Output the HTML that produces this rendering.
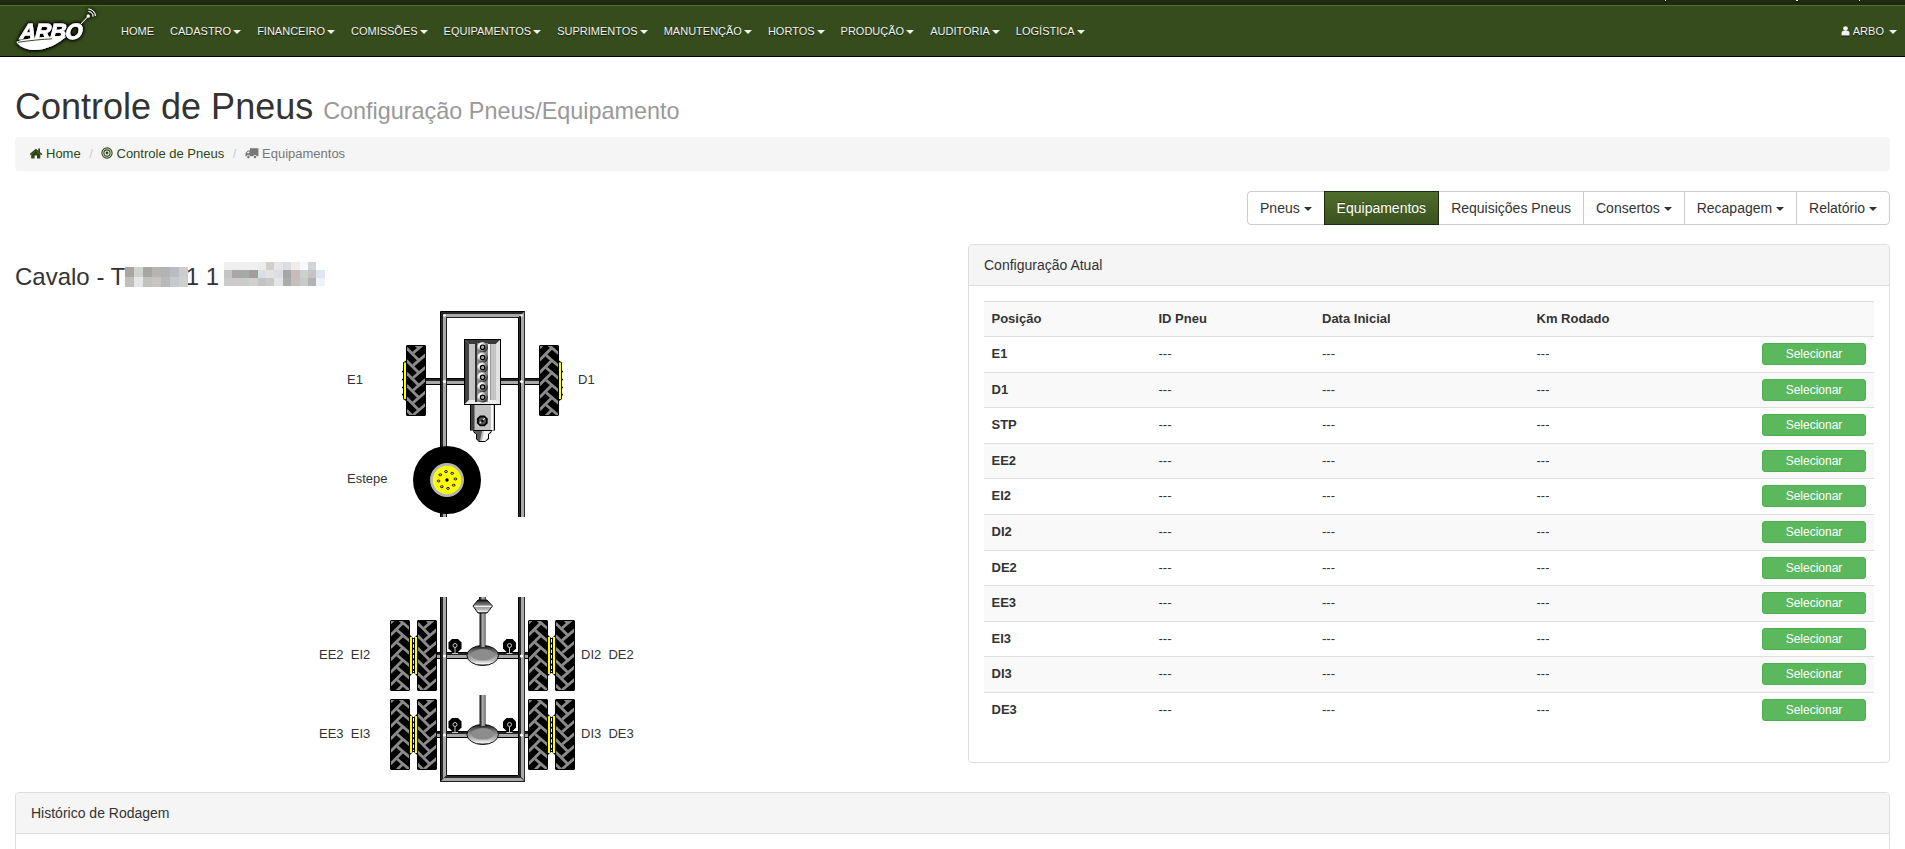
<!DOCTYPE html>
<html><head><meta charset="utf-8">
<style>
*{box-sizing:border-box}
html,body{margin:0;padding:0}
body{font-family:"Liberation Sans",sans-serif;font-size:13px;line-height:1.42857;color:#333;background:#fff;width:1905px;height:849px;overflow:hidden;position:relative}
.nav{position:absolute;left:0;top:0;width:1905px;height:57px;background:#364c1c;border-top:5px solid #1d2a0e;border-bottom:1px solid #000}
.nav:before{content:"";position:absolute;left:0;right:0;top:0;height:1px;background:#50702c}
.nav .items{position:absolute;left:113px;top:1px;height:51px;display:flex;align-items:center}
.nav .items a{color:#f2f2f2;font-size:11px;padding:0 8px;text-decoration:none;text-shadow:0 1px 1px rgba(0,0,0,.7);white-space:nowrap;line-height:51px}
.caret{display:inline-block;width:0;height:0;margin-left:2px;vertical-align:middle;border-top:4px solid;border-right:4px solid transparent;border-left:4px solid transparent}
.nav .user{position:absolute;right:8px;top:1px;line-height:51px;font-size:11px;color:#f2f2f2;text-shadow:0 1px 1px rgba(0,0,0,.7)}
.logo{position:absolute;left:0;top:-5px}
h1{position:absolute;left:15px;top:87px;margin:0;font-size:36px;font-weight:normal;line-height:40px;color:#333;white-space:nowrap}
h1 small{font-size:23.4px;color:#999;font-weight:normal}
.bc{position:absolute;left:15px;top:137px;width:1875px;height:34px;background:#f5f5f5;border-radius:4px;font-size:13px;line-height:34px;padding-left:15px;white-space:nowrap}
.bc a{color:#2f4716;text-decoration:none}
.bc .sep{color:#ccc;padding:0 8.6px 0 8.6px}
.bc .act{color:#777}
.bc svg{vertical-align:-1px;margin-right:3px}
.btng{position:absolute;right:15px;top:191px;height:34px;display:flex}
.btng .b .caret{margin-left:0}
.btng .b{height:34px;border:1px solid #ccc;margin-left:-1px;padding:0 12px;font-size:14px;line-height:32px;color:#333;background:#fff;white-space:nowrap}
.btng .b:first-child{border-radius:4px 0 0 4px;margin-left:0}
.btng .b:last-child{border-radius:0 4px 4px 0}
.btng .b.act{background:linear-gradient(#4f6d2c,#3a521f);border-color:#1e2b0f;color:#fff;text-shadow:0 -1px 0 rgba(0,0,0,.3);position:relative;z-index:2}
.h3{position:absolute;left:15px;top:264px;font-size:24px;line-height:26px;white-space:nowrap;color:#333}
.pix{position:absolute;display:grid}
.panel{position:absolute;border:1px solid #ddd;border-radius:4px;background:#fff}
.panel .ph{height:41px;background:#f5f5f5;border-bottom:1px solid #ddd;border-radius:3px 3px 0 0;padding:0 15px;font-size:14px;line-height:40px;color:#333}
.tr{position:absolute;left:984px;width:890px;border-top:1px solid #ddd;font-size:13px;line-height:18.57px}
.tr.st{background:#f9f9f9}
.tr span{position:absolute;top:8px}
.tr .b{font-weight:bold}
.tr .sel{position:absolute;right:8px;top:6px;width:104px;height:22px;background:#5cb85c;border:1px solid #4cae4c;border-radius:3px;color:#fff;font-size:12px;line-height:20px;text-align:center}
.lbl{position:absolute;font-size:13px;line-height:15px;color:#333;white-space:nowrap}
</style></head><body>
<div class="nav">
  <svg class="logo" width="110" height="56" viewBox="0 0 110 56"><defs><filter id="glow" x="-30%" y="-30%" width="160%" height="160%"><feGaussianBlur in="SourceAlpha" stdDeviation="2"/><feComponentTransfer><feFuncA type="linear" slope="2.2"/></feComponentTransfer><feMerge><feMergeNode/><feMergeNode in="SourceGraphic"/></feMerge></filter></defs>
<g filter="url(#glow)">
<text x="19" y="39" font-family="Liberation Sans" font-weight="bold" font-size="22" fill="#fff" stroke="#fff" stroke-width="0.7" transform="skewX(-14) translate(9.5,0)" letter-spacing="-0.8">ARBO</text>
<path d="M16.5 42 C24 38.5 40 36.5 66 36.8 C58 44 46 50.5 33 50 C25 49.5 19 46 16.5 42 Z" fill="#fff"/>
<path d="M18 42.3 C30 40.5 42 39.3 52 38.8" stroke="#384d1e" stroke-width="1" fill="none"/>
<line x1="81" y1="24" x2="88" y2="16.5" stroke="#fff" stroke-width="1"/>
<circle cx="88.3" cy="16" r="1.6" fill="#fff"/>
<path d="M88.5 11.5 A5 5 0 0 1 93 16.5" stroke="#fff" stroke-width="1" fill="none"/>
<path d="M88.5 9 A7.5 7.5 0 0 1 95.5 16" stroke="#fff" stroke-width="1" fill="none"/>
</g>
</svg>
  <div class="items">
    <a>HOME</a><a>CADASTRO<span class="caret"></span></a><a>FINANCEIRO<span class="caret"></span></a><a>COMISSÕES<span class="caret"></span></a><a>EQUIPAMENTOS<span class="caret"></span></a><a>SUPRIMENTOS<span class="caret"></span></a><a>MANUTENÇÃO<span class="caret"></span></a><a>HORTOS<span class="caret"></span></a><a>PRODUÇÃO<span class="caret"></span></a><a>AUDITORIA<span class="caret"></span></a><a>LOGÍSTICA<span class="caret"></span></a>
  </div>
  <div class="user"><svg width="9" height="10" viewBox="0 0 9 10" style="vertical-align:-1px;margin-right:3px;filter:drop-shadow(0 1px 0.5px rgba(0,0,0,.7))"><circle cx="4.5" cy="2.6" r="2.4" fill="#f2f2f2"/><path d="M0.5 9.6 L0.5 7 C0.5 5.4 1.8 4.8 3 4.8 L6 4.8 C7.2 4.8 8.5 5.4 8.5 7 L8.5 9.6 Z" fill="#f2f2f2"/></svg>ARBO <span class="caret" style="margin-left:2px"></span></div>
</div>
<h1>Controle de Pneus <small>Configuração Pneus/Equipamento</small></h1>
<div class="bc"><a><svg width="13" height="11" viewBox="0 0 13 11"><path d="M1.2 6.4 L5.8 2.6 L10.3 6.4 V10.4 H7 V7.4 H4.6 V10.4 H1.2 Z" fill="#2f4716"/><path d="M0.2 6.6 L5.8 1.8 L11.9 6.6" stroke="#2f4716" stroke-width="1.5" fill="none"/><rect x="8.3" y="0.5" width="1.7" height="3.5" fill="#2f4716"/></svg>Home</a><span class="sep">/</span><a><svg width="12" height="12" viewBox="0 0 12 12" style="margin-left:-1px;margin-right:4px"><circle cx="6" cy="6" r="5.1" fill="none" stroke="#2f4716" stroke-width="1.1"/><circle cx="6" cy="6" r="3.1" fill="none" stroke="#2f4716" stroke-width="1.1"/><circle cx="6" cy="6" r="1.4" fill="#2f4716"/></svg>Controle de Pneus</a><span class="sep">/</span><span class="act"><svg width="14" height="11" viewBox="0 0 14 11"><path d="M5 0.3 H13.4 V8.2 H0.5 V5.2 L2.8 2.6 H5 Z" fill="#777"/><path d="M1.6 5.2 L3.2 3.4 H4.3 V5.2 Z" fill="#f5f5f5"/><circle cx="3.4" cy="9" r="1.7" fill="#777" stroke="#f5f5f5" stroke-width="0.8"/><circle cx="10" cy="9" r="1.7" fill="#777" stroke="#f5f5f5" stroke-width="0.8"/></svg>Equipamentos</span></div>
<div class="btng">
  <div class="b">Pneus <span class="caret"></span></div><div class="b act">Equipamentos</div><div class="b">Requisições Pneus</div><div class="b">Consertos <span class="caret"></span></div><div class="b">Recapagem <span class="caret"></span></div><div class="b">Relatório <span class="caret"></span></div>
</div>
<div class="h3">Cavalo - T<span style="display:inline-block;width:60.5px"></span>1 1</div>
<div class="pix" style="left:125px;top:267px;grid-template-columns:repeat(7,9px);grid-auto-rows:10px"><i style="background:#a8a5a2"></i><i style="background:#d0d2d1"></i><i style="background:#a6a6a5"></i><i style="background:#b8b4b1"></i><i style="background:#b2b3b5"></i><i style="background:#b9bdc1"></i><i style="background:#cdcdcd"></i><i style="background:#c0bfbd"></i><i style="background:#e6e6e6"></i><i style="background:#c2c1bf"></i><i style="background:#c8c6c4"></i><i style="background:#b8b9bb"></i><i style="background:#c7cacd"></i><i style="background:#cfcfcf"></i></div><div class="pix" style="left:224px;top:262px;grid-template-columns:repeat(12,8.4px);grid-auto-rows:8px"><i style="background:#efefef"></i><i style="background:#efefef"></i><i style="background:#efefef"></i><i style="background:#efefef"></i><i style="background:#ececea"></i><i style="background:#d0cfcd"></i><i style="background:#e6e6e6"></i><i style="background:#dcdde0"></i><i style="background:#efedeb"></i><i style="background:#f8f9fb"></i><i style="background:#d4d4d4"></i><i style="background:#ffffff"></i><i style="background:#c4c4c4"></i><i style="background:#aaa6a5"></i><i style="background:#a8a9a9"></i><i style="background:#a19d9b"></i><i style="background:#dadfe3"></i><i style="background:#e4e2de"></i><i style="background:#dcdde1"></i><i style="background:#a5a7a7"></i><i style="background:#c5bdb9"></i><i style="background:#cfd0ce"></i><i style="background:#c4c4c4"></i><i style="background:#dde5ee"></i><i style="background:#cbcbcb"></i><i style="background:#cbcbcb"></i><i style="background:#cbcbcb"></i><i style="background:#cfcfcd"></i><i style="background:#c2c3c5"></i><i style="background:#c9c9c9"></i><i style="background:#e6e5e3"></i><i style="background:#a9abad"></i><i style="background:#c4bfbb"></i><i style="background:#c8cac9"></i><i style="background:#b1b2b2"></i><i style="background:#eef2f6"></i></div>
<svg width="360" height="490" viewBox="300 300 360 490" style="position:absolute;left:300px;top:300px">
<defs>
<linearGradient id="eng" x1="0" x2="1" y1="0" y2="0">
<stop offset="0" stop-color="#707070"/><stop offset="0.12" stop-color="#d0d0d0"/><stop offset="0.3" stop-color="#b0b0b0"/><stop offset="0.7" stop-color="#b8b8b8"/><stop offset="0.88" stop-color="#e8e8e8"/><stop offset="1" stop-color="#606060"/>
</linearGradient>
<linearGradient id="col" x1="0" x2="1" y1="0" y2="0">
<stop offset="0" stop-color="#3a3a3a"/><stop offset="0.25" stop-color="#9a9a9a"/><stop offset="0.7" stop-color="#e0e0e0"/><stop offset="1" stop-color="#5a5a5a"/>
</linearGradient>
<radialGradient id="bolt" cx="0.3" cy="0.3" r="0.75">
<stop offset="0" stop-color="#ffffff"/><stop offset="0.35" stop-color="#e8e8e8"/><stop offset="0.7" stop-color="#7a7a7a"/><stop offset="1" stop-color="#2a2a2a"/>
</radialGradient>
<linearGradient id="diff" x1="0" x2="0" y1="0" y2="1">
<stop offset="0" stop-color="#111"/><stop offset="0.2" stop-color="#555"/><stop offset="0.45" stop-color="#8a8a8a"/><stop offset="0.75" stop-color="#bdbdbd"/><stop offset="0.9" stop-color="#f0f0f0"/><stop offset="1" stop-color="#444"/>
</linearGradient>
<linearGradient id="shaft" x1="0" x2="1" y1="0" y2="0">
<stop offset="0" stop-color="#111"/><stop offset="0.2" stop-color="#333"/><stop offset="0.45" stop-color="#aaa"/><stop offset="0.8" stop-color="#999"/><stop offset="1" stop-color="#222"/>
</linearGradient>
</defs>
<rect x="426" y="378" width="113" height="7" fill="#000"/>
<rect x="426" y="379" width="113" height="2" fill="#222"/>
<rect x="426" y="381" width="113" height="3" fill="#a8a8a8"/>
<g><polygon points="440,311 447,318 447,517 440,517" fill="#000"/></g>
<polygon points="441,312 443,314 443,517 441,517" fill="#272727"/>
<polygon points="443,314 446,317 446,517 443,517" fill="#a9a9a9"/>
<polygon points="446,317 447,318 447,517 446,517" fill="#1e1e1e"/>
<g><polygon points="518,311 525,311 525,517 518,517" fill="#000"/></g>
<polygon points="519,311 521,311 521,517 519,517" fill="#272727"/>
<polygon points="521,311 524,311 524,517 521,517" fill="#a9a9a9"/>
<polygon points="524,311 525,311 525,517 524,517" fill="#1e1e1e"/>
<polygon points="440,311 525,311 518,318 447,318" fill="#000"/>
<polygon points="441,312 524,312 522,314 443,314" fill="#272727"/>
<polygon points="443,314 522,314 519,317 446,317" fill="#a9a9a9"/>
<polygon points="446,317 519,317 518,318 447,318" fill="#1e1e1e"/>
<polygon points="518,318 525,311 525,517 518,517" fill="#000"/>
<polygon points="519,317 520,316 520,517 519,517" fill="#272727"/>
<polygon points="521,315 524,312 524,517 521,517" fill="#a9a9a9"/>
<rect x="524" y="311" width="1" height="206" fill="#2a2a2a"/>
<circle cx="444.5" cy="315.5" r="1.3" fill="#fff"/><circle cx="521.5" cy="315.5" r="1.3" fill="#eee"/>
<circle cx="444.5" cy="381.5" r="1.6" fill="#fff"/><circle cx="521.5" cy="381.5" r="1.6" fill="#fff"/>
<polygon points="406,360.5 406,401 403,399 403,362.5" fill="#000"/>
<rect x="404" y="362.5" width="2" height="36.5" fill="#ffff00"/>
<rect x="402" y="370.8" width="1.5" height="1.6" fill="#000"/>
<rect x="402" y="378.8" width="1.5" height="1.6" fill="#000"/>
<rect x="402" y="386.7" width="1.5" height="1.6" fill="#000"/>
<rect x="402" y="393.8" width="1.5" height="1.6" fill="#000"/>
<path d="M407 345 H425 L426 346 V415 L425 416 H407 L406 415 V346 Z" fill="#000"/>
<clipPath id="tc1"><rect x="407" y="346" width="18" height="69"/></clipPath>
<g clip-path="url(#tc1)"><g transform="translate(0,761) scale(1,-1)" stroke="#8c8c8c" stroke-width="2.8" fill="none" stroke-linecap="butt">
<line x1="406.5" y1="338.5" x2="419.5" y2="325.5"/>
<line x1="413.2" y1="333.6" x2="425.8" y2="344.4"/>
<line x1="406.5" y1="350.9" x2="419.5" y2="337.9"/>
<line x1="413.2" y1="346.0" x2="425.8" y2="356.8"/>
<line x1="406.5" y1="363.3" x2="419.5" y2="350.3"/>
<line x1="413.2" y1="358.4" x2="425.8" y2="369.2"/>
<line x1="406.5" y1="375.7" x2="419.5" y2="362.7"/>
<line x1="413.2" y1="370.8" x2="425.8" y2="381.6"/>
<line x1="406.5" y1="388.1" x2="419.5" y2="375.1"/>
<line x1="413.2" y1="383.2" x2="425.8" y2="394.0"/>
<line x1="406.5" y1="400.5" x2="419.5" y2="387.5"/>
<line x1="413.2" y1="395.6" x2="425.8" y2="406.4"/>
<line x1="406.5" y1="412.9" x2="419.5" y2="399.9"/>
<line x1="413.2" y1="408.0" x2="425.8" y2="418.8"/>
<line x1="406.5" y1="425.3" x2="419.5" y2="412.3"/>
<line x1="413.2" y1="420.4" x2="425.8" y2="431.2"/>
<line x1="406.5" y1="437.7" x2="419.5" y2="424.7"/>
<line x1="413.2" y1="432.8" x2="425.8" y2="443.6"/>
</g></g>
<polygon points="559,360.5 559,401 562,399 562,362.5" fill="#000"/>
<rect x="559" y="362.5" width="2" height="36.5" fill="#ffff00"/>
<rect x="561.5" y="370.8" width="1.5" height="1.6" fill="#000"/>
<rect x="561.5" y="378.8" width="1.5" height="1.6" fill="#000"/>
<rect x="561.5" y="386.7" width="1.5" height="1.6" fill="#000"/>
<rect x="561.5" y="393.8" width="1.5" height="1.6" fill="#000"/>
<path d="M540 345 H558 L559 346 V415 L558 416 H540 L539 415 V346 Z" fill="#000"/>
<clipPath id="tc2"><rect x="540" y="346" width="18" height="69"/></clipPath>
<g clip-path="url(#tc2)"><g stroke="#8c8c8c" stroke-width="2.8" fill="none" stroke-linecap="butt">
<line x1="539.5" y1="335.5" x2="552.5" y2="322.5"/>
<line x1="546.2" y1="330.6" x2="558.8" y2="341.4"/>
<line x1="539.5" y1="347.9" x2="552.5" y2="334.9"/>
<line x1="546.2" y1="343.0" x2="558.8" y2="353.8"/>
<line x1="539.5" y1="360.3" x2="552.5" y2="347.3"/>
<line x1="546.2" y1="355.4" x2="558.8" y2="366.2"/>
<line x1="539.5" y1="372.7" x2="552.5" y2="359.7"/>
<line x1="546.2" y1="367.8" x2="558.8" y2="378.6"/>
<line x1="539.5" y1="385.1" x2="552.5" y2="372.1"/>
<line x1="546.2" y1="380.2" x2="558.8" y2="391.0"/>
<line x1="539.5" y1="397.5" x2="552.5" y2="384.5"/>
<line x1="546.2" y1="392.6" x2="558.8" y2="403.4"/>
<line x1="539.5" y1="409.9" x2="552.5" y2="396.9"/>
<line x1="546.2" y1="405.0" x2="558.8" y2="415.8"/>
<line x1="539.5" y1="422.3" x2="552.5" y2="409.3"/>
<line x1="546.2" y1="417.4" x2="558.8" y2="428.2"/>
<line x1="539.5" y1="434.7" x2="552.5" y2="421.7"/>
<line x1="546.2" y1="429.8" x2="558.8" y2="440.6"/>
</g></g>
<rect x="464" y="339" width="37" height="66" fill="#000"/>
<rect x="465" y="340" width="35" height="64" fill="#c4c4c4"/>
<polygon points="465,340 469,344 469,400 465,404" fill="#3c3c3c"/>
<polygon points="465,340 500,340 496,344 469,344" fill="#3a3a3a"/>
<polygon points="500,340 500,404 496,400 496,344" fill="#e2e2e2"/>
<polygon points="465,404 500,404 496,400 469,400" fill="#ececec"/>
<rect x="466" y="344" width="3" height="56" fill="#444"/>
<rect x="475" y="343" width="2" height="59" fill="#333"/>
<rect x="477" y="343" width="11" height="59" fill="#8a8a8a"/>
<rect x="488" y="344" width="2" height="57" fill="#f6f6f6"/>
<rect x="490" y="344" width="1" height="56" fill="#9a9a9a"/>
<circle cx="482.6" cy="347.2" r="5.3" fill="url(#bolt)"/>
<circle cx="482.6" cy="347.2" r="2.2" fill="#a8a8a8" stroke="#000" stroke-width="1.2"/>
<circle cx="482.6" cy="357.5" r="5.3" fill="url(#bolt)"/>
<circle cx="482.6" cy="357.5" r="2.2" fill="#a8a8a8" stroke="#000" stroke-width="1.2"/>
<circle cx="482.6" cy="367.6" r="5.3" fill="url(#bolt)"/>
<circle cx="482.6" cy="367.6" r="2.2" fill="#a8a8a8" stroke="#000" stroke-width="1.2"/>
<circle cx="482.6" cy="377.3" r="5.3" fill="url(#bolt)"/>
<circle cx="482.6" cy="377.3" r="2.2" fill="#a8a8a8" stroke="#000" stroke-width="1.2"/>
<circle cx="482.6" cy="387.0" r="5.3" fill="url(#bolt)"/>
<circle cx="482.6" cy="387.0" r="2.2" fill="#a8a8a8" stroke="#000" stroke-width="1.2"/>
<circle cx="482.6" cy="397.3" r="5.3" fill="url(#bolt)"/>
<circle cx="482.6" cy="397.3" r="2.2" fill="#a8a8a8" stroke="#000" stroke-width="1.2"/>
<path d="M470 404.5 H495 V430.5 H492 L491 433 L489 434 V439 L485 442 H479 L476 439 V434 L474 433 L473 430.5 H470 Z" fill="#000"/>
<rect x="471" y="405" width="23" height="25" fill="#c2c2c2"/>
<rect x="471" y="405" width="3.5" height="25" fill="#404040"/>
<rect x="491" y="405" width="2" height="25" fill="#f8f8f8"/>
<path d="M474 431 H491 L488 434 V438 L485 441 H479 L477 438 V434 Z" fill="#bdbdbd"/>
<path d="M474 431 H482 L480 441 H479 L477 438 V434 Z" fill="#5a5a5a"/>
<path d="M484 431 H491 L488 434 V438 L485 441 H482 Z" fill="#f4f4f4"/>
<polygon points="480,415.5 484.6,415.5 487.7,418.6 487.7,423.2 484.6,426.3 480,426.3 476.9,423.2 476.9,418.6" fill="#000"/>
<circle cx="482.3" cy="420.9" r="3.6" fill="#555"/>
<path d="M479.6 423.4 L484.8 418.2" stroke="#eee" stroke-width="1.2"/>
<circle cx="482.3" cy="420.9" r="1.3" fill="#000"/>
<ellipse cx="447" cy="480" rx="34" ry="34" fill="#000"/>
<circle cx="447" cy="480" r="17" fill="#b4b4b4"/>
<circle cx="447" cy="480" r="14.2" fill="#ffff00"/>
<circle cx="447" cy="480" r="1.7" fill="#000"/>
<ellipse cx="446.0" cy="471.6" rx="1.4" ry="1" fill="#ddd" stroke="#000" stroke-width="0.9"/>
<ellipse cx="452.2" cy="473.3" rx="1.4" ry="1" fill="#ddd" stroke="#000" stroke-width="0.9"/>
<ellipse cx="455.4" cy="479.0" rx="1.4" ry="1" fill="#ddd" stroke="#000" stroke-width="0.9"/>
<ellipse cx="453.7" cy="485.2" rx="1.4" ry="1" fill="#ddd" stroke="#000" stroke-width="0.9"/>
<ellipse cx="448.0" cy="488.4" rx="1.4" ry="1" fill="#ddd" stroke="#000" stroke-width="0.9"/>
<ellipse cx="441.8" cy="486.7" rx="1.4" ry="1" fill="#ddd" stroke="#000" stroke-width="0.9"/>
<ellipse cx="438.6" cy="481.0" rx="1.4" ry="1" fill="#ddd" stroke="#000" stroke-width="0.9"/>
<ellipse cx="440.3" cy="474.8" rx="1.4" ry="1" fill="#ddd" stroke="#000" stroke-width="0.9"/>
<rect x="437" y="652" width="91" height="7" fill="#000"/>
<rect x="437" y="653" width="91" height="2" fill="#222"/>
<rect x="437" y="655" width="91" height="3" fill="#a8a8a8"/>
<rect x="437" y="731" width="91" height="7" fill="#000"/>
<rect x="437" y="732" width="91" height="2" fill="#222"/>
<rect x="437" y="734" width="91" height="3" fill="#a8a8a8"/>
<g><polygon points="440,597 447,597 447,775 440,782" fill="#000"/></g>
<polygon points="441,597 443,597 443,779 441,781" fill="#272727"/>
<polygon points="443,597 446,597 446,776 443,779" fill="#a9a9a9"/>
<polygon points="446,597 447,597 447,775 446,776" fill="#1e1e1e"/>
<polygon points="518,597 525,597 525,782 518,775" fill="#000"/>
<polygon points="519,597 521,597 521,777 519,775" fill="#272727"/>
<polygon points="521,597 524,597 524,780 521,777" fill="#a9a9a9"/>
<rect x="524" y="597" width="1" height="185" fill="#2a2a2a"/>
<polygon points="447,775 518,775 525,782 440,782" fill="#000"/>
<polygon points="446,776 519,776 521,778 444,778" fill="#272727"/>
<polygon points="444,778 521,778 524,781 441,781" fill="#a9a9a9"/>
<polygon points="441,781 524,781 525,782 440,782" fill="#1e1e1e"/>
<circle cx="444.5" cy="656" r="1.6" fill="#fff"/><circle cx="521.5" cy="656" r="1.6" fill="#fff"/>
<path d="M452 639 L458 639 L461.5 642.5 L461.5 648.5 L458 652 L452 652 L448.5 648.5 L448.5 642.5 Z" fill="#000"/>
<circle cx="455" cy="645.5" r="2" fill="none" stroke="#c8c8c8" stroke-width="1"/>
<path d="M455 647.5 L455 653 M452 653.5 L458 653.5" stroke="#c8c8c8" stroke-width="1"/>
<path d="M506.5 639 L512.5 639 L516.0 642.5 L516.0 648.5 L512.5 652 L506.5 652 L503.0 648.5 L503.0 642.5 Z" fill="#000"/>
<circle cx="509.5" cy="645.5" r="2" fill="none" stroke="#c8c8c8" stroke-width="1"/>
<path d="M509.5 647.5 L509.5 653 M506.5 653.5 L512.5 653.5" stroke="#c8c8c8" stroke-width="1"/>
<ellipse cx="482.7" cy="655.5" rx="15.8" ry="10" fill="url(#diff)" stroke="#111" stroke-width="1"/>
<ellipse cx="482.7" cy="654.8" rx="11.5" ry="5.8" fill="#8c8c8c"/>
<path d="M391 620 H409 L410 621 V690 L409 691 H391 L390 690 V621 Z" fill="#000"/>
<clipPath id="tc3"><rect x="391" y="621" width="18" height="69"/></clipPath>
<g clip-path="url(#tc3)"><g stroke="#8c8c8c" stroke-width="2.8" fill="none" stroke-linecap="butt">
<line x1="390.5" y1="610.5" x2="403.5" y2="597.5"/>
<line x1="397.2" y1="605.6" x2="409.8" y2="616.4"/>
<line x1="390.5" y1="622.9" x2="403.5" y2="609.9"/>
<line x1="397.2" y1="618.0" x2="409.8" y2="628.8"/>
<line x1="390.5" y1="635.3" x2="403.5" y2="622.3"/>
<line x1="397.2" y1="630.4" x2="409.8" y2="641.2"/>
<line x1="390.5" y1="647.7" x2="403.5" y2="634.7"/>
<line x1="397.2" y1="642.8" x2="409.8" y2="653.6"/>
<line x1="390.5" y1="660.1" x2="403.5" y2="647.1"/>
<line x1="397.2" y1="655.2" x2="409.8" y2="666.0"/>
<line x1="390.5" y1="672.5" x2="403.5" y2="659.5"/>
<line x1="397.2" y1="667.6" x2="409.8" y2="678.4"/>
<line x1="390.5" y1="684.9" x2="403.5" y2="671.9"/>
<line x1="397.2" y1="680.0" x2="409.8" y2="690.8"/>
<line x1="390.5" y1="697.3" x2="403.5" y2="684.3"/>
<line x1="397.2" y1="692.4" x2="409.8" y2="703.2"/>
<line x1="390.5" y1="709.7" x2="403.5" y2="696.7"/>
<line x1="397.2" y1="704.8" x2="409.8" y2="715.6"/>
</g></g>
<path d="M418 620 H436 L437 621 V690 L436 691 H418 L417 690 V621 Z" fill="#000"/>
<clipPath id="tc4"><rect x="418" y="621" width="18" height="69"/></clipPath>
<g clip-path="url(#tc4)"><g transform="translate(0,1311) scale(1,-1)" stroke="#8c8c8c" stroke-width="2.8" fill="none" stroke-linecap="butt">
<line x1="417.5" y1="613.5" x2="430.5" y2="600.5"/>
<line x1="424.2" y1="608.6" x2="436.8" y2="619.4"/>
<line x1="417.5" y1="625.9" x2="430.5" y2="612.9"/>
<line x1="424.2" y1="621.0" x2="436.8" y2="631.8"/>
<line x1="417.5" y1="638.3" x2="430.5" y2="625.3"/>
<line x1="424.2" y1="633.4" x2="436.8" y2="644.2"/>
<line x1="417.5" y1="650.7" x2="430.5" y2="637.7"/>
<line x1="424.2" y1="645.8" x2="436.8" y2="656.6"/>
<line x1="417.5" y1="663.1" x2="430.5" y2="650.1"/>
<line x1="424.2" y1="658.2" x2="436.8" y2="669.0"/>
<line x1="417.5" y1="675.5" x2="430.5" y2="662.5"/>
<line x1="424.2" y1="670.6" x2="436.8" y2="681.4"/>
<line x1="417.5" y1="687.9" x2="430.5" y2="674.9"/>
<line x1="424.2" y1="683.0" x2="436.8" y2="693.8"/>
<line x1="417.5" y1="700.3" x2="430.5" y2="687.3"/>
<line x1="424.2" y1="695.4" x2="436.8" y2="706.2"/>
<line x1="417.5" y1="712.7" x2="430.5" y2="699.7"/>
<line x1="424.2" y1="707.8" x2="436.8" y2="718.6"/>
</g></g>
<path d="M529 620 H547 L548 621 V690 L547 691 H529 L528 690 V621 Z" fill="#000"/>
<clipPath id="tc5"><rect x="529" y="621" width="18" height="69"/></clipPath>
<g clip-path="url(#tc5)"><g stroke="#8c8c8c" stroke-width="2.8" fill="none" stroke-linecap="butt">
<line x1="528.5" y1="610.5" x2="541.5" y2="597.5"/>
<line x1="535.2" y1="605.6" x2="547.8" y2="616.4"/>
<line x1="528.5" y1="622.9" x2="541.5" y2="609.9"/>
<line x1="535.2" y1="618.0" x2="547.8" y2="628.8"/>
<line x1="528.5" y1="635.3" x2="541.5" y2="622.3"/>
<line x1="535.2" y1="630.4" x2="547.8" y2="641.2"/>
<line x1="528.5" y1="647.7" x2="541.5" y2="634.7"/>
<line x1="535.2" y1="642.8" x2="547.8" y2="653.6"/>
<line x1="528.5" y1="660.1" x2="541.5" y2="647.1"/>
<line x1="535.2" y1="655.2" x2="547.8" y2="666.0"/>
<line x1="528.5" y1="672.5" x2="541.5" y2="659.5"/>
<line x1="535.2" y1="667.6" x2="547.8" y2="678.4"/>
<line x1="528.5" y1="684.9" x2="541.5" y2="671.9"/>
<line x1="535.2" y1="680.0" x2="547.8" y2="690.8"/>
<line x1="528.5" y1="697.3" x2="541.5" y2="684.3"/>
<line x1="535.2" y1="692.4" x2="547.8" y2="703.2"/>
<line x1="528.5" y1="709.7" x2="541.5" y2="696.7"/>
<line x1="535.2" y1="704.8" x2="547.8" y2="715.6"/>
</g></g>
<path d="M556 620 H574 L575 621 V690 L574 691 H556 L555 690 V621 Z" fill="#000"/>
<clipPath id="tc6"><rect x="556" y="621" width="18" height="69"/></clipPath>
<g clip-path="url(#tc6)"><g transform="translate(0,1311) scale(1,-1)" stroke="#8c8c8c" stroke-width="2.8" fill="none" stroke-linecap="butt">
<line x1="555.5" y1="613.5" x2="568.5" y2="600.5"/>
<line x1="562.2" y1="608.6" x2="574.8" y2="619.4"/>
<line x1="555.5" y1="625.9" x2="568.5" y2="612.9"/>
<line x1="562.2" y1="621.0" x2="574.8" y2="631.8"/>
<line x1="555.5" y1="638.3" x2="568.5" y2="625.3"/>
<line x1="562.2" y1="633.4" x2="574.8" y2="644.2"/>
<line x1="555.5" y1="650.7" x2="568.5" y2="637.7"/>
<line x1="562.2" y1="645.8" x2="574.8" y2="656.6"/>
<line x1="555.5" y1="663.1" x2="568.5" y2="650.1"/>
<line x1="562.2" y1="658.2" x2="574.8" y2="669.0"/>
<line x1="555.5" y1="675.5" x2="568.5" y2="662.5"/>
<line x1="562.2" y1="670.6" x2="574.8" y2="681.4"/>
<line x1="555.5" y1="687.9" x2="568.5" y2="674.9"/>
<line x1="562.2" y1="683.0" x2="574.8" y2="693.8"/>
<line x1="555.5" y1="700.3" x2="568.5" y2="687.3"/>
<line x1="562.2" y1="695.4" x2="574.8" y2="706.2"/>
<line x1="555.5" y1="712.7" x2="568.5" y2="699.7"/>
<line x1="562.2" y1="707.8" x2="574.8" y2="718.6"/>
</g></g>
<polygon points="410,635 417,635 417,676 410,676" fill="#000"/>
<polygon points="410,635 413,638 414,638 417,635 " fill="#fff"/>
<polygon points="410,676 413,673 414,673 417,676 " fill="#fff"/>
<rect x="410" y="637" width="2" height="37" fill="#ffff00"/>
<rect x="415" y="637" width="2" height="37" fill="#ffff00"/>
<line x1="413.5" y1="639" x2="413.5" y2="672" stroke="#fff" stroke-width="1" stroke-dasharray="3.5,1.8"/>
<polygon points="548,635 555,635 555,676 548,676" fill="#000"/>
<polygon points="548,635 551,638 552,638 555,635 " fill="#fff"/>
<polygon points="548,676 551,673 552,673 555,676 " fill="#fff"/>
<rect x="548" y="637" width="2" height="37" fill="#ffff00"/>
<rect x="553" y="637" width="2" height="37" fill="#ffff00"/>
<line x1="551.5" y1="639" x2="551.5" y2="672" stroke="#fff" stroke-width="1" stroke-dasharray="3.5,1.8"/>
<circle cx="444.5" cy="735" r="1.6" fill="#fff"/><circle cx="521.5" cy="735" r="1.6" fill="#fff"/>
<path d="M452 718 L458 718 L461.5 721.5 L461.5 727.5 L458 731 L452 731 L448.5 727.5 L448.5 721.5 Z" fill="#000"/>
<circle cx="455" cy="724.5" r="2" fill="none" stroke="#c8c8c8" stroke-width="1"/>
<path d="M455 726.5 L455 732 M452 732.5 L458 732.5" stroke="#c8c8c8" stroke-width="1"/>
<path d="M506.5 718 L512.5 718 L516.0 721.5 L516.0 727.5 L512.5 731 L506.5 731 L503.0 727.5 L503.0 721.5 Z" fill="#000"/>
<circle cx="509.5" cy="724.5" r="2" fill="none" stroke="#c8c8c8" stroke-width="1"/>
<path d="M509.5 726.5 L509.5 732 M506.5 732.5 L512.5 732.5" stroke="#c8c8c8" stroke-width="1"/>
<ellipse cx="482.7" cy="734.5" rx="15.8" ry="10" fill="url(#diff)" stroke="#111" stroke-width="1"/>
<ellipse cx="482.7" cy="733.8" rx="11.5" ry="5.8" fill="#8c8c8c"/>
<path d="M391 699 H409 L410 700 V769 L409 770 H391 L390 769 V700 Z" fill="#000"/>
<clipPath id="tc7"><rect x="391" y="700" width="18" height="69"/></clipPath>
<g clip-path="url(#tc7)"><g stroke="#8c8c8c" stroke-width="2.8" fill="none" stroke-linecap="butt">
<line x1="390.5" y1="689.5" x2="403.5" y2="676.5"/>
<line x1="397.2" y1="684.6" x2="409.8" y2="695.4"/>
<line x1="390.5" y1="701.9" x2="403.5" y2="688.9"/>
<line x1="397.2" y1="697.0" x2="409.8" y2="707.8"/>
<line x1="390.5" y1="714.3" x2="403.5" y2="701.3"/>
<line x1="397.2" y1="709.4" x2="409.8" y2="720.2"/>
<line x1="390.5" y1="726.7" x2="403.5" y2="713.7"/>
<line x1="397.2" y1="721.8" x2="409.8" y2="732.6"/>
<line x1="390.5" y1="739.1" x2="403.5" y2="726.1"/>
<line x1="397.2" y1="734.2" x2="409.8" y2="745.0"/>
<line x1="390.5" y1="751.5" x2="403.5" y2="738.5"/>
<line x1="397.2" y1="746.6" x2="409.8" y2="757.4"/>
<line x1="390.5" y1="763.9" x2="403.5" y2="750.9"/>
<line x1="397.2" y1="759.0" x2="409.8" y2="769.8"/>
<line x1="390.5" y1="776.3" x2="403.5" y2="763.3"/>
<line x1="397.2" y1="771.4" x2="409.8" y2="782.2"/>
<line x1="390.5" y1="788.7" x2="403.5" y2="775.7"/>
<line x1="397.2" y1="783.8" x2="409.8" y2="794.6"/>
</g></g>
<path d="M418 699 H436 L437 700 V769 L436 770 H418 L417 769 V700 Z" fill="#000"/>
<clipPath id="tc8"><rect x="418" y="700" width="18" height="69"/></clipPath>
<g clip-path="url(#tc8)"><g transform="translate(0,1469) scale(1,-1)" stroke="#8c8c8c" stroke-width="2.8" fill="none" stroke-linecap="butt">
<line x1="417.5" y1="692.5" x2="430.5" y2="679.5"/>
<line x1="424.2" y1="687.6" x2="436.8" y2="698.4"/>
<line x1="417.5" y1="704.9" x2="430.5" y2="691.9"/>
<line x1="424.2" y1="700.0" x2="436.8" y2="710.8"/>
<line x1="417.5" y1="717.3" x2="430.5" y2="704.3"/>
<line x1="424.2" y1="712.4" x2="436.8" y2="723.2"/>
<line x1="417.5" y1="729.7" x2="430.5" y2="716.7"/>
<line x1="424.2" y1="724.8" x2="436.8" y2="735.6"/>
<line x1="417.5" y1="742.1" x2="430.5" y2="729.1"/>
<line x1="424.2" y1="737.2" x2="436.8" y2="748.0"/>
<line x1="417.5" y1="754.5" x2="430.5" y2="741.5"/>
<line x1="424.2" y1="749.6" x2="436.8" y2="760.4"/>
<line x1="417.5" y1="766.9" x2="430.5" y2="753.9"/>
<line x1="424.2" y1="762.0" x2="436.8" y2="772.8"/>
<line x1="417.5" y1="779.3" x2="430.5" y2="766.3"/>
<line x1="424.2" y1="774.4" x2="436.8" y2="785.2"/>
<line x1="417.5" y1="791.7" x2="430.5" y2="778.7"/>
<line x1="424.2" y1="786.8" x2="436.8" y2="797.6"/>
</g></g>
<path d="M529 699 H547 L548 700 V769 L547 770 H529 L528 769 V700 Z" fill="#000"/>
<clipPath id="tc9"><rect x="529" y="700" width="18" height="69"/></clipPath>
<g clip-path="url(#tc9)"><g stroke="#8c8c8c" stroke-width="2.8" fill="none" stroke-linecap="butt">
<line x1="528.5" y1="689.5" x2="541.5" y2="676.5"/>
<line x1="535.2" y1="684.6" x2="547.8" y2="695.4"/>
<line x1="528.5" y1="701.9" x2="541.5" y2="688.9"/>
<line x1="535.2" y1="697.0" x2="547.8" y2="707.8"/>
<line x1="528.5" y1="714.3" x2="541.5" y2="701.3"/>
<line x1="535.2" y1="709.4" x2="547.8" y2="720.2"/>
<line x1="528.5" y1="726.7" x2="541.5" y2="713.7"/>
<line x1="535.2" y1="721.8" x2="547.8" y2="732.6"/>
<line x1="528.5" y1="739.1" x2="541.5" y2="726.1"/>
<line x1="535.2" y1="734.2" x2="547.8" y2="745.0"/>
<line x1="528.5" y1="751.5" x2="541.5" y2="738.5"/>
<line x1="535.2" y1="746.6" x2="547.8" y2="757.4"/>
<line x1="528.5" y1="763.9" x2="541.5" y2="750.9"/>
<line x1="535.2" y1="759.0" x2="547.8" y2="769.8"/>
<line x1="528.5" y1="776.3" x2="541.5" y2="763.3"/>
<line x1="535.2" y1="771.4" x2="547.8" y2="782.2"/>
<line x1="528.5" y1="788.7" x2="541.5" y2="775.7"/>
<line x1="535.2" y1="783.8" x2="547.8" y2="794.6"/>
</g></g>
<path d="M556 699 H574 L575 700 V769 L574 770 H556 L555 769 V700 Z" fill="#000"/>
<clipPath id="tc10"><rect x="556" y="700" width="18" height="69"/></clipPath>
<g clip-path="url(#tc10)"><g transform="translate(0,1469) scale(1,-1)" stroke="#8c8c8c" stroke-width="2.8" fill="none" stroke-linecap="butt">
<line x1="555.5" y1="692.5" x2="568.5" y2="679.5"/>
<line x1="562.2" y1="687.6" x2="574.8" y2="698.4"/>
<line x1="555.5" y1="704.9" x2="568.5" y2="691.9"/>
<line x1="562.2" y1="700.0" x2="574.8" y2="710.8"/>
<line x1="555.5" y1="717.3" x2="568.5" y2="704.3"/>
<line x1="562.2" y1="712.4" x2="574.8" y2="723.2"/>
<line x1="555.5" y1="729.7" x2="568.5" y2="716.7"/>
<line x1="562.2" y1="724.8" x2="574.8" y2="735.6"/>
<line x1="555.5" y1="742.1" x2="568.5" y2="729.1"/>
<line x1="562.2" y1="737.2" x2="574.8" y2="748.0"/>
<line x1="555.5" y1="754.5" x2="568.5" y2="741.5"/>
<line x1="562.2" y1="749.6" x2="574.8" y2="760.4"/>
<line x1="555.5" y1="766.9" x2="568.5" y2="753.9"/>
<line x1="562.2" y1="762.0" x2="574.8" y2="772.8"/>
<line x1="555.5" y1="779.3" x2="568.5" y2="766.3"/>
<line x1="562.2" y1="774.4" x2="574.8" y2="785.2"/>
<line x1="555.5" y1="791.7" x2="568.5" y2="778.7"/>
<line x1="562.2" y1="786.8" x2="574.8" y2="797.6"/>
</g></g>
<polygon points="410,714 417,714 417,755 410,755" fill="#000"/>
<polygon points="410,714 413,717 414,717 417,714 " fill="#fff"/>
<polygon points="410,755 413,752 414,752 417,755 " fill="#fff"/>
<rect x="410" y="716" width="2" height="37" fill="#ffff00"/>
<rect x="415" y="716" width="2" height="37" fill="#ffff00"/>
<line x1="413.5" y1="718" x2="413.5" y2="751" stroke="#fff" stroke-width="1" stroke-dasharray="3.5,1.8"/>
<polygon points="548,714 555,714 555,755 548,755" fill="#000"/>
<polygon points="548,714 551,717 552,717 555,714 " fill="#fff"/>
<polygon points="548,755 551,752 552,752 555,755 " fill="#fff"/>
<rect x="548" y="716" width="2" height="37" fill="#ffff00"/>
<rect x="553" y="716" width="2" height="37" fill="#ffff00"/>
<line x1="551.5" y1="718" x2="551.5" y2="751" stroke="#fff" stroke-width="1" stroke-dasharray="3.5,1.8"/>
<rect x="479.5" y="610" width="6" height="37" fill="url(#shaft)"/>
<rect x="479.5" y="695" width="6" height="31" fill="url(#shaft)"/>
<rect x="479" y="597" width="7" height="4" fill="url(#shaft)"/>
<path d="M473 606 L478 600 L487 600 L492.5 606 L487 613 L478 613 Z" fill="url(#diff)" stroke="#111" stroke-width="1"/>
<line x1="474" y1="606.3" x2="491.5" y2="606.3" stroke="#fff" stroke-width="1.2"/>
</svg>
<div class="lbl" style="left:347px;top:372px">E1</div>
<div class="lbl" style="left:578px;top:372px">D1</div>
<div class="lbl" style="left:347px;top:471px">Estepe</div>
<div class="lbl" style="left:319px;top:647px">EE2&nbsp; EI2</div>
<div class="lbl" style="left:581px;top:647px">DI2&nbsp; DE2</div>
<div class="lbl" style="left:319px;top:726px">EE3&nbsp; EI3</div>
<div class="lbl" style="left:581px;top:726px">DI3&nbsp; DE3</div>
<div class="panel" style="left:968px;top:244px;width:922px;height:519px">
  <div class="ph">Configuração Atual</div>
</div>
<div class="tr st" style="top:301px;height:35px"><span class="b" style="left:7.5px">Posição</span><span class="b" style="left:174.5px">ID Pneu</span><span class="b" style="left:338px">Data Inicial</span><span class="b" style="left:552.5px">Km Rodado</span></div>
<div class="tr" style="top:336px;height:36px"><span class="b" style="left:7.5px">E1</span><span style="left:174.5px">---</span><span style="left:338px">---</span><span style="left:552.5px">---</span><span class="sel">Selecionar</span></div>
<div class="tr st" style="top:372px;height:35px"><span class="b" style="left:7.5px">D1</span><span style="left:174.5px">---</span><span style="left:338px">---</span><span style="left:552.5px">---</span><span class="sel">Selecionar</span></div>
<div class="tr" style="top:407px;height:36px"><span class="b" style="left:7.5px">STP</span><span style="left:174.5px">---</span><span style="left:338px">---</span><span style="left:552.5px">---</span><span class="sel">Selecionar</span></div>
<div class="tr st" style="top:443px;height:35px"><span class="b" style="left:7.5px">EE2</span><span style="left:174.5px">---</span><span style="left:338px">---</span><span style="left:552.5px">---</span><span class="sel">Selecionar</span></div>
<div class="tr" style="top:478px;height:36px"><span class="b" style="left:7.5px">EI2</span><span style="left:174.5px">---</span><span style="left:338px">---</span><span style="left:552.5px">---</span><span class="sel">Selecionar</span></div>
<div class="tr st" style="top:514px;height:36px"><span class="b" style="left:7.5px">DI2</span><span style="left:174.5px">---</span><span style="left:338px">---</span><span style="left:552.5px">---</span><span class="sel">Selecionar</span></div>
<div class="tr" style="top:550px;height:35px"><span class="b" style="left:7.5px">DE2</span><span style="left:174.5px">---</span><span style="left:338px">---</span><span style="left:552.5px">---</span><span class="sel">Selecionar</span></div>
<div class="tr st" style="top:585px;height:36px"><span class="b" style="left:7.5px">EE3</span><span style="left:174.5px">---</span><span style="left:338px">---</span><span style="left:552.5px">---</span><span class="sel">Selecionar</span></div>
<div class="tr" style="top:621px;height:35px"><span class="b" style="left:7.5px">EI3</span><span style="left:174.5px">---</span><span style="left:338px">---</span><span style="left:552.5px">---</span><span class="sel">Selecionar</span></div>
<div class="tr st" style="top:656px;height:36px"><span class="b" style="left:7.5px">DI3</span><span style="left:174.5px">---</span><span style="left:338px">---</span><span style="left:552.5px">---</span><span class="sel">Selecionar</span></div>
<div class="tr" style="top:692px;height:36px"><span class="b" style="left:7.5px">DE3</span><span style="left:174.5px">---</span><span style="left:338px">---</span><span style="left:552.5px">---</span><span class="sel">Selecionar</span></div>

<div class="panel" style="left:15px;top:792px;width:1875px;height:80px">
  <div class="ph">Histórico de Rodagem</div>
</div>
<i style="position:absolute;left:1664.6px;top:0;width:1.6px;height:1.3px;background:#fff;box-shadow:0 1px 1px rgba(0,0,0,.6)"></i>
<i style="position:absolute;left:1796px;top:0;width:1.6px;height:1.3px;background:#fff;box-shadow:0 1px 1px rgba(0,0,0,.6)"></i>
<i style="position:absolute;left:1858.6px;top:0;width:1.6px;height:1.3px;background:#fff;box-shadow:0 1px 1px rgba(0,0,0,.6)"></i>
</body></html>
